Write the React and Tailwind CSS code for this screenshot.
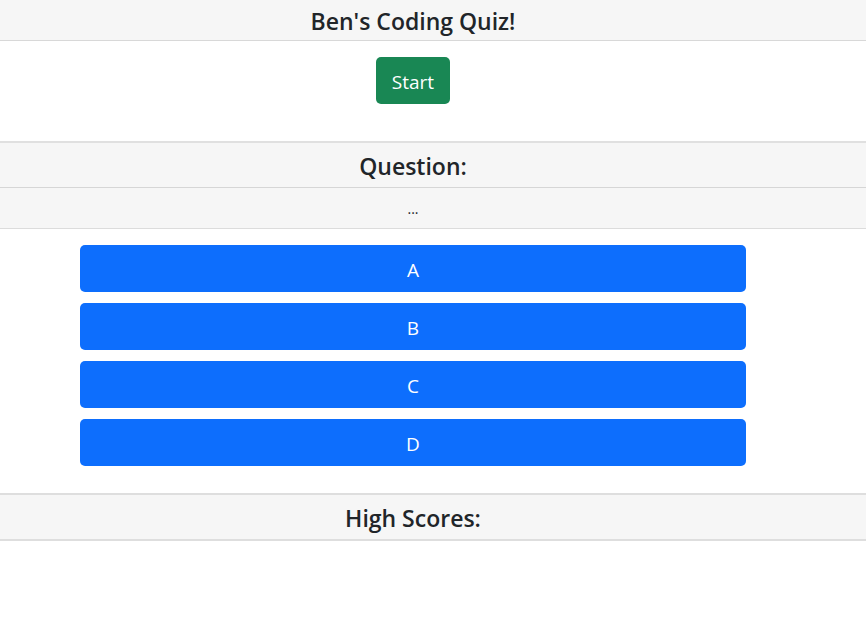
import React from 'react';

const answers = ['A', 'B', 'C', 'D'];

export default function App() {
    return (
        <div className="min-h-screen bg-white text-[#212529] font-['Open_Sans',sans-serif]">
            {/* title bar */}
            <header className="h-[41px] bg-[#f6f6f6] border-b border-[#d8d8d8] pr-[40px] pt-[2px] flex items-center justify-center">
                <h1 className="text-[23px] font-semibold leading-none">Ben's Coding Quiz!</h1>
            </header>

            <div className="pr-[40px] flex justify-center pt-[16px] pb-[37px]">
                <button className="bg-[#198754] text-white text-[19px] h-[47px] px-[16px] pt-[3px] rounded-[5px]">
                    Start
                </button>
            </div>

            {/* question */}
            <section className="border-t-2 border-[#e0e0e0] bg-[#f6f6f6]">
                <div className="h-[45px] pr-[40px] pt-[2px] flex items-center justify-center border-b border-[#d6d6d6]">
                    <h2 className="text-[23px] font-semibold leading-none">Question:</h2>
                </div>
                <div className="h-[41px] pr-[40px] flex items-center justify-center border-b border-[#dcdcdc]">
                    <p className="text-[14px]">...</p>
                </div>
            </section>

            <div className="pl-[80px] pr-[120px] pt-[16px] pb-[27px] flex flex-col gap-[11px]">
                {answers.map((a) => (
                    <button
                        key={a}
                        className="w-full h-[47px] pt-[3px] bg-[#0d6efd] text-white text-[19px] rounded-[5px]"
                    >
                        {a}
                    </button>
                ))}
            </div>

            {/* scores */}
            <section className="h-[48px] border-y-2 border-[#dedede] bg-[#f6f6f6] pr-[40px] pt-[2px] flex items-center justify-center">
                <h2 className="text-[23px] font-semibold leading-none">High Scores:</h2>
            </section>
        </div>
    );
}
